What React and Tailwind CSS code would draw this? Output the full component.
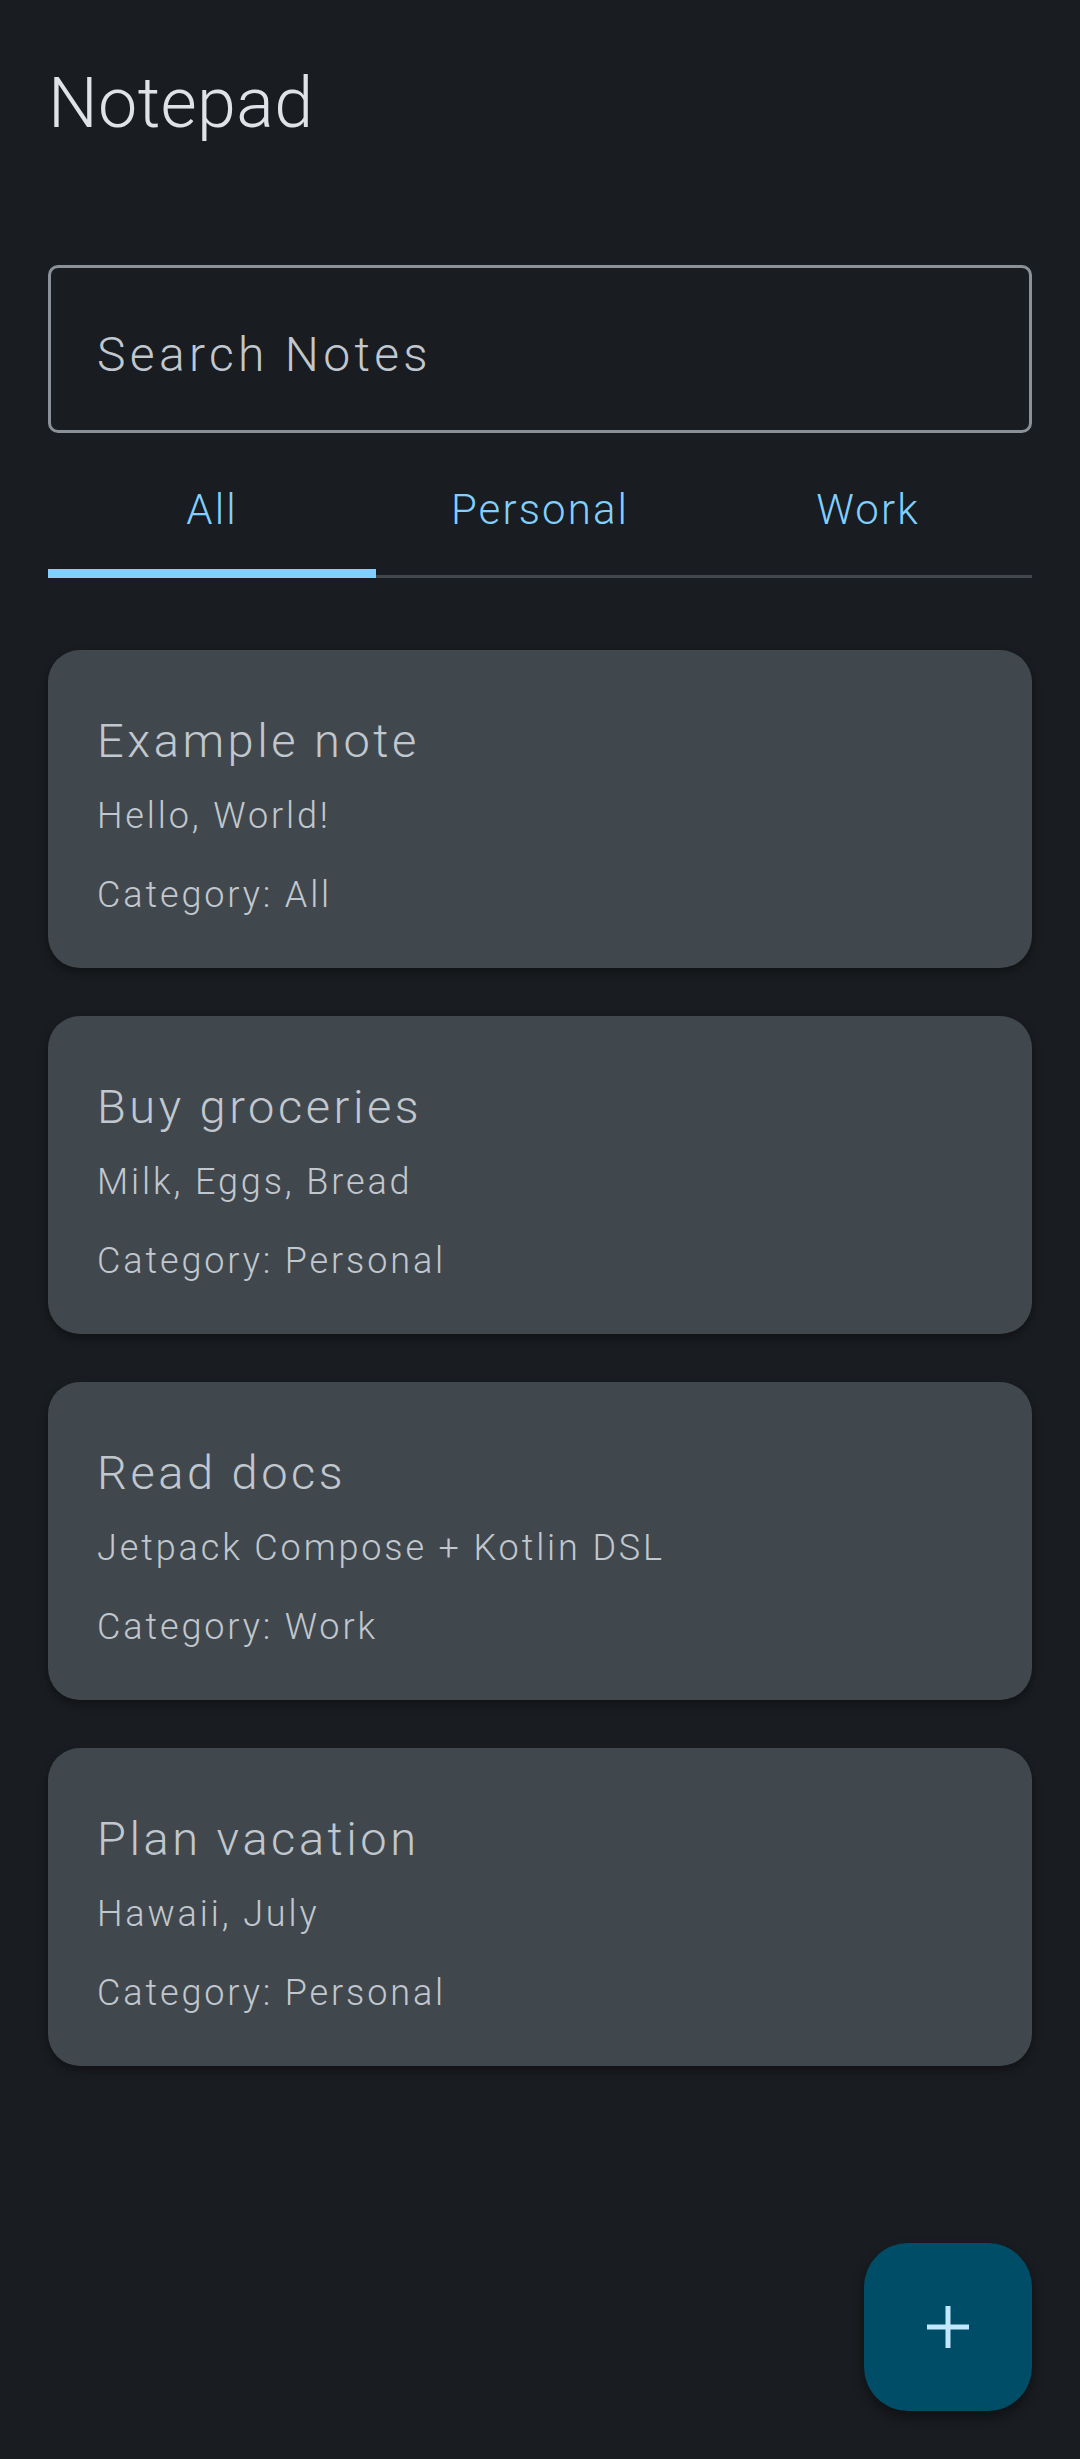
import React, { useState } from 'react';

const notes = [
  { id: 1, title: 'Example note', body: 'Hello, World!', category: 'All' },
  { id: 2, title: 'Buy groceries', body: 'Milk, Eggs, Bread', category: 'Personal' },
  { id: 3, title: 'Read docs', body: 'Jetpack Compose + Kotlin DSL', category: 'Work' },
  { id: 4, title: 'Plan vacation', body: 'Hawaii, July', category: 'Personal' },
];

const tabs = ['All', 'Personal', 'Work'];

const App = () => {
  const [active, setActive] = useState('All');
  const [query, setQuery] = useState('');

  return (
    <div
      className="relative min-h-[2459px] bg-[#191c20] px-[48px] pt-[68px] font-light"
      style={{ fontFamily: 'Roboto, "Liberation Sans", sans-serif' }}
    >
      <h1 className="text-[70px] leading-[70px] font-light text-[#e1e2e8] tracking-[0.005em]">Notepad</h1>

      {/* Search */}
      <div className="mt-[127px] h-[168px] rounded-[10px] border-[3px] border-[#8b9198] pl-[46px] pt-[58px]">
        <input
          value={query}
          onChange={(e) => setQuery(e.target.value)}
          placeholder="Search Notes"
          className="w-full bg-transparent text-[48px] leading-[48px] font-light tracking-[0.09em] text-[#c1c7ce] placeholder:text-[#c1c7ce] outline-none"
        />
      </div>

      {/* Tabs */}
      <div className="mt-[21px] grid grid-cols-3">
        {tabs.map((tab) => (
          <button
            key={tab}
            onClick={() => setActive(tab)}
            className="flex h-[124px] flex-col items-center pt-[35px]"
          >
            <span className="text-[42px] leading-[42px] font-light tracking-[0.05em] text-[#80cfff]">{tab}</span>
            <span
              className={
                active === tab
                  ? 'mt-auto block h-[9px] w-full bg-[#82cfff]'
                  : 'mt-auto block h-[3px] w-full bg-[#43474e]'
              }
            />
          </button>
        ))}
      </div>

      {/* Notes */}
      <div className="mt-[72px] flex flex-col gap-[48px]">
        {notes.map((note) => (
          <div
            key={note.id}
            className="h-[318px] rounded-[32px] bg-[#41484d] px-[49px] pt-[61px] shadow-[0_4px_8px_rgba(0,0,0,0.35)]"
          >
            <h2 className="text-[47px] leading-[60px] tracking-[0.075em] text-[#c1c7ce]">{note.title}</h2>
            <p className="mt-[21px] text-[36px] leading-[48px] tracking-[0.08em] text-[#c1c7ce]">{note.body}</p>
            <p className="mt-[31px] text-[36px] leading-[48px] tracking-[0.08em] text-[#c1c7ce]">
              Category: {note.category}
            </p>
          </div>
        ))}
      </div>

      {/* FAB */}
      <button className="absolute bottom-[48px] right-[48px] flex h-[168px] w-[168px] items-center justify-center rounded-[44px] bg-[#004d67] shadow-[0_6px_12px_rgba(0,0,0,0.4)]">
        <svg width="42" height="42" viewBox="0 0 42 42">
          <path d="M21 0v42M0 21h42" stroke="#c2e8ff" strokeWidth="5" />
        </svg>
      </button>
    </div>
  );
};

export default App;
